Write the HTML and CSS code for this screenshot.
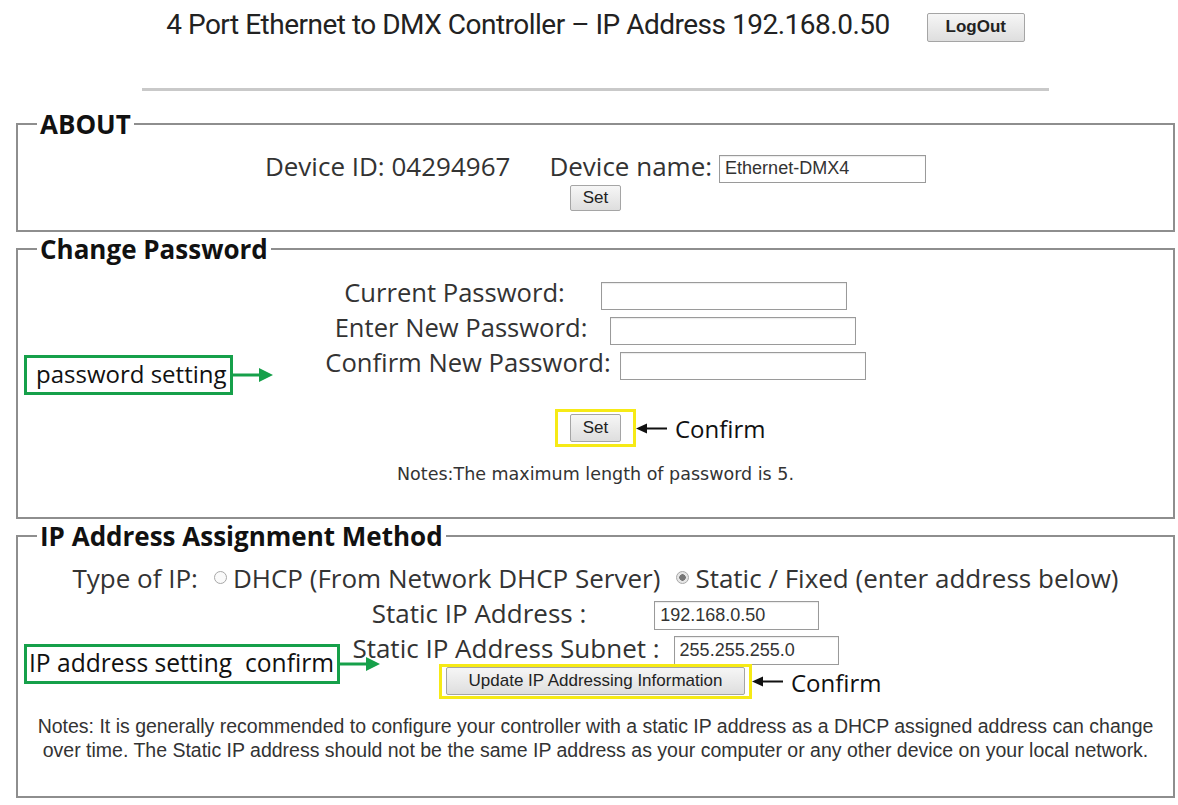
FILE: index.html
```html
<!DOCTYPE html>
<html lang="en">
  <head>
    <meta charset="UTF-8" />
    <meta name="viewport" content="width=device-width, initial-scale=1.0" />
    <title>4 Port Ethernet to DMX Controller</title>
    <link rel="stylesheet" href="styles.css">
  </head>
  <body>
    <div class="page">
      <div class="header">
        <span class="title">4 Port Ethernet to DMX Controller – IP Address 192.168.0.50</span>
        <button type="button" class="btn logout">LogOut</button>
      </div>
      <hr />

      <fieldset class="box about">
        <legend>ABOUT</legend>
        <div class="row about-row">
          <span class="label">Device ID: 04294967</span>
          <label for="deviceName" class="label name-label">Device name:</label>
          <input type="text" id="deviceName" class="field name-field" value="Ethernet-DMX4" />
        </div>
        <div class="row set-row">
          <button type="button" class="btn">Set</button>
        </div>
      </fieldset>

      <fieldset class="box password">
        <legend>Change Password</legend>
        <div class="row pw-row">
          <label for="curPass" class="label gap-1">Current Password:</label>
          <input type="password" id="curPass" class="field pw-field" />
        </div>
        <div class="row pw-row">
          <label for="newPass" class="label gap-2">Enter New Password:</label>
          <input type="password" id="newPass" class="field pw-field" />
        </div>
        <div class="row pw-row">
          <label for="confPass" class="label gap-3">Confirm New Password:</label>
          <input type="password" id="confPass" class="field pw-field" />
        </div>
        <div class="row pw-set">
          <span class="mark mark-small">
            <button type="button" class="btn">Set</button>
            <span class="callout">
              <svg width="32" height="12" viewBox="0 0 32 12"><path d="M31 6H9" stroke="#111" stroke-width="2"/><path d="M0 6 11 1v10z" fill="#111"/></svg>
              Confirm
            </span>
          </span>
        </div>
        <p class="pw-note">Notes:The maximum length of password is 5.</p>

        <div class="tag tag-pw">
          <span class="tag-text">password setting</span>
          <svg class="tag-arrow" width="40" height="16" viewBox="0 0 40 16"><path d="M0 8H28" stroke="#16a04a" stroke-width="3"/><path d="M40 8 26 1v14z" fill="#16a04a"/></svg>
        </div>
      </fieldset>

      <fieldset class="box ip">
        <legend>IP Address Assignment Method</legend>
        <div class="row ip-row type-row">
          <span class="label">Type of IP:</span>
          <label class="label radio-label dhcp"><input type="radio" name="ipType" class="radio" />DHCP (From Network DHCP Server)</label>
          <label class="label radio-label"><input type="radio" name="ipType" class="radio" checked />Static / Fixed (enter address below)</label>
        </div>
        <div class="row ip-row">
          <label for="staticIp" class="label gap-ip">Static IP Address :</label>
          <input type="text" id="staticIp" class="field ip-field" value="192.168.0.50" />
        </div>
        <div class="row ip-row">
          <label for="subnet" class="label gap-sub">Static IP Address Subnet :</label>
          <input type="text" id="subnet" class="field ip-field" value="255.255.255.0" />
        </div>
        <div class="row ip-set">
          <span class="mark mark-wide">
            <button type="button" class="btn">Update IP Addressing Information</button>
            <span class="callout">
              <svg width="32" height="12" viewBox="0 0 32 12"><path d="M31 6H9" stroke="#111" stroke-width="2"/><path d="M0 6 11 1v10z" fill="#111"/></svg>
              Confirm
            </span>
          </span>
        </div>
        <p class="ip-note">Notes: It is generally recommended to configure your controller with a static IP address as a DHCP assigned address can change<br />over time. The Static IP address should not be the same IP address as your computer or any other device on your local network.</p>

        <div class="tag tag-ip">
          <span class="tag-text">IP address setting&nbsp; confirm</span>
          <svg class="tag-arrow" width="40" height="16" viewBox="0 0 40 16"><path d="M0 8H28" stroke="#16a04a" stroke-width="3"/><path d="M40 8 26 1v14z" fill="#16a04a"/></svg>
        </div>
      </fieldset>
    </div>
  </body>
</html>
```

FILE: styles.css
```css
* {
  box-sizing: border-box;
}
body {
  margin: 0;
  background: #fff;
  font-family: "Open Sans", "Noto Sans", sans-serif;
  color: #333;
}
.page {
  width: 1159px;
  margin-left: 16px;
}
.header {
  display: flex;
  justify-content: center;
  align-items: center;
  gap: 37px;
  height: 30px;
  margin-top: 10px;
}
.title {
  font-family: Roboto, "Liberation Sans", sans-serif;
  font-size: 28px;
  line-height: 30px;
  letter-spacing: -0.5px;
  color: #222;
}
.btn {
  font-family: "Liberation Sans", Arial, sans-serif;
  font-size: 17px;
  color: #222;
  height: 28px;
  padding: 0 12px;
  background: linear-gradient(#f6f6f6, #dedede);
  border: 1px solid #a5a5a5;
  border-radius: 2px;
}
.logout {
  font-weight: bold;
  height: 29px;
  width: 98px;
  margin-top: 4px;
}
hr {
  width: 907px;
  height: 3px;
  margin: 48px auto 0;
  border: none;
  background: #c9c9c9;
}
.box {
  position: relative;
  width: 1159px;
  margin: 2px 0 0;
  padding: 0;
  border: 2px solid #8e8e8e;
}
.about {
  margin-top: 18px;
  padding-bottom: 19px;
}
legend {
  margin-left: 19px;
  padding: 0 3px;
  font-size: 26px;
  line-height: 30px;
  font-weight: bold;
  color: #111;
}
.row {
  display: flex;
  justify-content: center;
  align-items: center;
}
.label {
  font-size: 26px;
  color: #333;
  margin-bottom: 6px;
}
.field {
  font-family: "Liberation Sans", Arial, sans-serif;
  font-size: 18px;
  color: #333;
  height: 28px;
  padding: 0 5px;
  border: 1px solid #9a9a9a;
  box-shadow: inset 0 1px 1px rgba(0, 0, 0, 0.08);
}
.about-row {
  height: 33px;
  margin-top: 13px;
}
.name-label {
  margin-left: 39px;
  margin-right: 7px;
}
.name-field {
  width: 207px;
}
.set-row {
  height: 26px;
}
.set-row .btn {
  height: 26px;
  width: 51px;
  padding: 0;
}

.password {
  padding-bottom: 33px;
}
.pw-row {
  height: 35px;
}
.pw-row .label {
  font-size: 25.6px;
}
.pw-row:first-of-type {
  margin-top: 14px;
}
.pw-field {
  width: 246px;
}
.gap-1 { margin-right: 36px; }
.gap-2 { margin-right: 23px; }
.gap-3 { margin-right: 9px; }
.pw-set {
  margin-top: 26px;
}
.mark {
  position: relative;
  display: inline-block;
  border: 3px solid #f6ea16;
}
.mark .btn {
  display: block;
}
.mark-small {
  padding: 2px 12px;
}
.mark-small .btn {
  width: 51px;
  padding: 0;
}
.mark-wide {
  padding: 0 4px 1px;
}
.mark-wide .btn {
  width: 299px;
  padding: 0;
}
.callout {
  position: absolute;
  left: 100%;
  top: 50%;
  transform: translateY(-50%);
  margin-left: 3px;
  display: flex;
  align-items: center;
  gap: 7px;
  white-space: nowrap;
  font-size: 24px;
  color: #111;
}
.pw-note {
  margin: 17px 0 0;
  text-align: center;
  font-family: "DejaVu Sans", Verdana, sans-serif;
  font-size: 17.5px;
  line-height: 20px;
  color: #333;
}

.ip {
  padding-bottom: 34px;
}
.ip-row {
  height: 35px;
}
.type-row {
  margin-top: 12px;
}
.radio-label {
  display: flex;
  align-items: center;
}
.dhcp {
  margin-left: 16px;
  margin-right: 16px;
}
.radio {
  flex: none;
  appearance: none;
  width: 13px;
  height: 13px;
  min-width: 13px;
  margin: 0 6px 0 0;
  border: 1px solid #a8a8a8;
  border-radius: 50%;
  background: #fafafa;
}
.radio:checked {
  background: radial-gradient(circle, #777 0 3px, #e6e6e6 3.5px);
}
.gap-ip { margin-right: 68px; }
.gap-sub { margin-right: 14px; }
.ip-field {
  width: 165px;
  height: 29px;
}
.ip-set {
  margin-top: -4px;
}
.ip-note {
  margin: 15px 0 0;
  text-align: center;
  font-family: "Liberation Sans", Arial, sans-serif;
  font-size: 19.5px;
  line-height: 24px;
  color: #333;
}

.tag {
  position: absolute;
  left: 6px;
  display: flex;
  align-items: center;
}
.tag-pw {
  top: 91px;
}
.tag-ip {
  top: 93px;
}
.tag-text {
  display: block;
  height: 40px;
  padding: 0 3px 0 9px;
  border: 3px solid #16a04a;
  font-size: 24px;
  line-height: 32px;
  color: #111;
}
.tag-ip .tag-text {
  padding: 0 3px 0 2px;
  font-size: 24.6px;
}
```
